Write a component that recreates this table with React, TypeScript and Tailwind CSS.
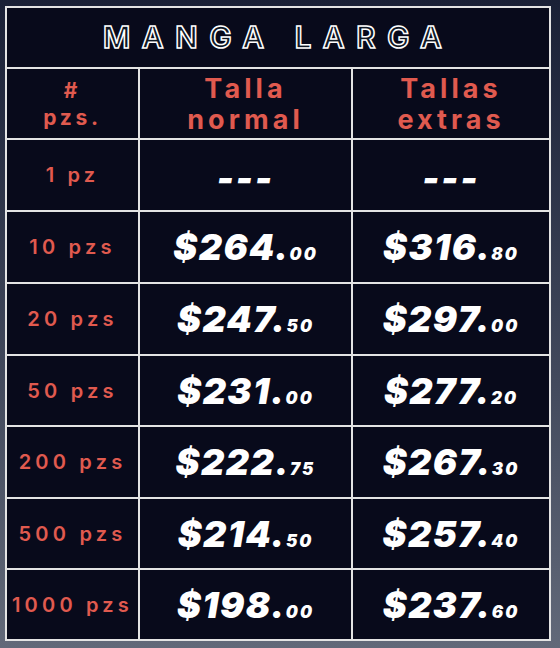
import React from 'react'

const rows = [
  { qty: '1 pz', normal: null, extra: null },
  { qty: '10 pzs', normal: ['264', '00'], extra: ['316', '80'] },
  { qty: '20 pzs', normal: ['247', '50'], extra: ['297', '00'] },
  { qty: '50 pzs', normal: ['231', '00'], extra: ['277', '20'] },
  { qty: '200 pzs', normal: ['222', '75'], extra: ['267', '30'] },
  { qty: '500 pzs', normal: ['214', '50'], extra: ['257', '40'] },
  { qty: '1000 pzs', normal: ['198', '00'], extra: ['237', '60'] },
]

const Price = ({ value }: { value: string[] | null }) => {
  if (!value) {
    return (
      <span className="pt-[6px] font-['Inter',sans-serif] text-[36px] font-black italic tracking-[0.06em] text-white">
        ---
      </span>
    )
  }
  return (
    <span className="font-['Inter',sans-serif] font-black italic text-white">
      <span className="text-[36px] tracking-[0.04em]">${value[0]}.</span>
      <span className="text-[17px] tracking-[0.12em]">{value[1]}</span>
    </span>
  )
}

const App = () => {
  return (
    <div className="h-[648px] w-[560px] bg-gradient-to-b from-[#1a2036] to-[#626979] pl-[5px] pt-[6px]">
      <div className="grid w-[546px] grid-cols-[131px_211px_196px] grid-rows-[59px_69px_70px_70px_70px_69px_70px_69px_69px] gap-[2px] border-2 border-[#e4e4e4] bg-[#e4e4e4] font-['Inter',sans-serif]">
        <div className="col-span-3 flex items-center justify-center bg-[#080a1b]">
          <span className="text-[30px] font-semibold tracking-[0.38em] text-[#0d1622] [-webkit-text-stroke:1.5px_#ffffff]">
            MANGA LARGA
          </span>
        </div>

        <div className="flex flex-col items-center justify-center bg-[#080a1b] text-[21px] font-bold leading-[27px] tracking-[0.18em] text-[#e05a4f]">
          <span>#</span>
          <span>pzs.</span>
        </div>
        <div className="flex flex-col items-center justify-center bg-[#080a1b] text-[27px] font-bold leading-[31px] tracking-[0.15em] text-[#e05a4f]">
          <span>Talla</span>
          <span>normal</span>
        </div>
        <div className="flex flex-col items-center justify-center bg-[#080a1b] text-[27px] font-bold leading-[31px] tracking-[0.15em] text-[#e05a4f]">
          <span>Tallas</span>
          <span>extras</span>
        </div>

        {rows.map((r) => (
          <React.Fragment key={r.qty}>
            <div className="flex items-center justify-center whitespace-nowrap bg-[#080a1b] text-[20px] font-semibold tracking-[0.21em] text-[#e05a4f]">
              {r.qty}
            </div>
            <div className="flex items-center justify-center bg-[#080a1b]">
              <Price value={r.normal} />
            </div>
            <div className="flex items-center justify-center bg-[#080a1b]">
              <Price value={r.extra} />
            </div>
          </React.Fragment>
        ))}
      </div>
    </div>
  )
}

export default App
